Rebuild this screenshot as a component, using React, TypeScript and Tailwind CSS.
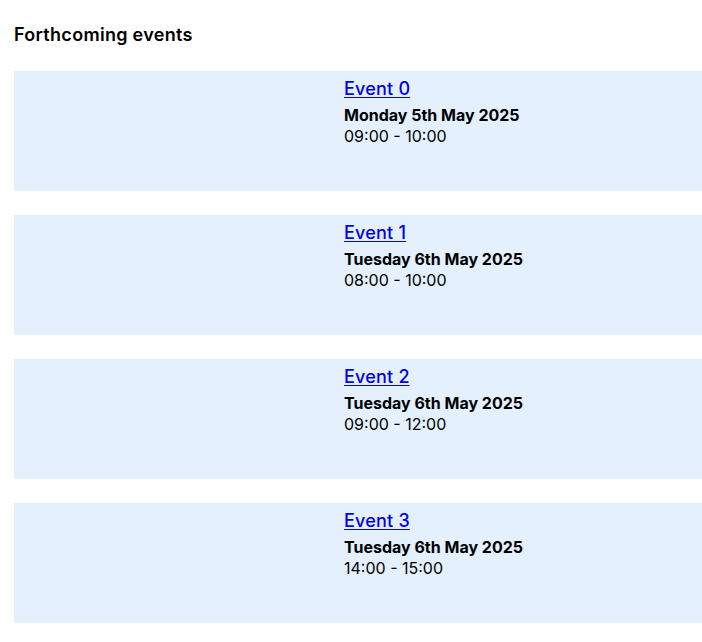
const events = [
  { name: 'Event 0', date: 'Monday 5th May 2025', time: '09:00 - 10:00' },
  { name: 'Event 1', date: 'Tuesday 6th May 2025', time: '08:00 - 10:00' },
  { name: 'Event 2', date: 'Tuesday 6th May 2025', time: '09:00 - 12:00' },
  { name: 'Event 3', date: 'Tuesday 6th May 2025', time: '14:00 - 15:00' },
]

function EventCard({ name, date, time }: { name: string; date: string; time: string }) {
  return (
    <div className="flex h-[120px] bg-[#e4f0fe]">
      <div className="w-[330px] shrink-0" />
      <div className="pt-[6px]">
        <a href="#" className="text-[18px] leading-[24px] font-medium text-[#0000ee] underline underline-offset-2 tracking-[0.2px]">
          {name}
        </a>
        <div className="mt-[4px] text-[16px] leading-[21px] font-bold text-black">{date}</div>
        <div className="text-[16px] leading-[20px] text-black">{time}</div>
      </div>
    </div>
  )
}

export default function App() {
  return (
    <div className="min-h-[642px] bg-white pl-[14px] pt-[23px] font-['Inter',sans-serif]">
      <h2 className="text-[18px] leading-[24px] font-semibold text-black tracking-[0.3px]">Forthcoming events</h2>
      <div className="mt-[24px] flex flex-col gap-[24px]">
        {events.map((e) => (
          <EventCard key={e.name} {...e} />
        ))}
      </div>
    </div>
  )
}
